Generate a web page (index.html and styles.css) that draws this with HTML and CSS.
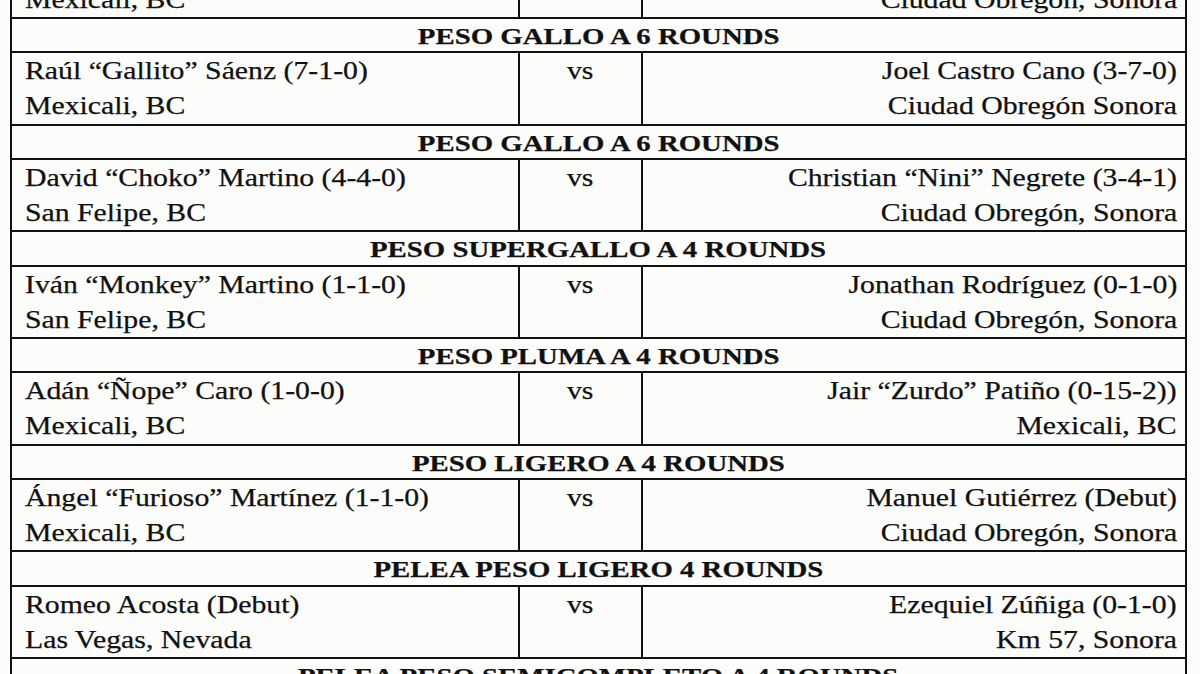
FILE: index.html
```html
<!DOCTYPE html>
<html lang="es">
<head>
<meta charset="utf-8">
<title>Cartelera</title>
<link rel="stylesheet" href="styles.css">
</head>
<body>
<div class="sheet">
  <div class="match">
    <div class="cell left"><div class="ln"><span class="t">&nbsp;</span></div><div class="ln"><span class="t">Mexicali, BC</span></div></div>
    <div class="cell mid"><div class="ln"><span class="t">vs</span></div></div>
    <div class="cell right"><div class="ln"><span class="t">&nbsp;</span></div><div class="ln"><span class="t">Ciudad Obregón, Sonora</span></div></div>
  </div>

  <div class="hdr"><span class="t">PESO GALLO A 6 ROUNDS</span></div>
  <div class="match">
    <div class="cell left"><div class="ln"><span class="t">Raúl “Gallito” Sáenz (7-1-0)</span></div><div class="ln"><span class="t">Mexicali, BC</span></div></div>
    <div class="cell mid"><div class="ln"><span class="t">vs</span></div></div>
    <div class="cell right"><div class="ln"><span class="t">Joel Castro Cano (3-7-0)</span></div><div class="ln"><span class="t">Ciudad Obregón Sonora</span></div></div>
  </div>

  <div class="hdr"><span class="t">PESO GALLO A 6 ROUNDS</span></div>
  <div class="match">
    <div class="cell left"><div class="ln"><span class="t">David “Choko” Martino (4-4-0)</span></div><div class="ln"><span class="t">San Felipe, BC</span></div></div>
    <div class="cell mid"><div class="ln"><span class="t">vs</span></div></div>
    <div class="cell right"><div class="ln"><span class="t">Christian “Nini” Negrete (3-4-1)</span></div><div class="ln"><span class="t">Ciudad Obregón, Sonora</span></div></div>
  </div>

  <div class="hdr"><span class="t">PESO SUPERGALLO A 4 ROUNDS</span></div>
  <div class="match">
    <div class="cell left"><div class="ln"><span class="t">Iván “Monkey” Martino (1-1-0)</span></div><div class="ln"><span class="t">San Felipe, BC</span></div></div>
    <div class="cell mid"><div class="ln"><span class="t">vs</span></div></div>
    <div class="cell right"><div class="ln"><span class="t">Jonathan Rodríguez (0-1-0)</span></div><div class="ln"><span class="t">Ciudad Obregón, Sonora</span></div></div>
  </div>

  <div class="hdr"><span class="t">PESO PLUMA A 4 ROUNDS</span></div>
  <div class="match">
    <div class="cell left"><div class="ln"><span class="t">Adán “Ñope” Caro (1-0-0)</span></div><div class="ln"><span class="t">Mexicali, BC</span></div></div>
    <div class="cell mid"><div class="ln"><span class="t">vs</span></div></div>
    <div class="cell right"><div class="ln"><span class="t">Jair “Zurdo” Patiño (0-15-2))</span></div><div class="ln"><span class="t">Mexicali, BC</span></div></div>
  </div>

  <div class="hdr"><span class="t">PESO LIGERO A 4 ROUNDS</span></div>
  <div class="match">
    <div class="cell left"><div class="ln"><span class="t">Ángel “Furioso” Martínez (1-1-0)</span></div><div class="ln"><span class="t">Mexicali, BC</span></div></div>
    <div class="cell mid"><div class="ln"><span class="t">vs</span></div></div>
    <div class="cell right"><div class="ln"><span class="t">Manuel Gutiérrez (Debut)</span></div><div class="ln"><span class="t">Ciudad Obregón, Sonora</span></div></div>
  </div>

  <div class="hdr"><span class="t">PELEA PESO LIGERO 4 ROUNDS</span></div>
  <div class="match">
    <div class="cell left"><div class="ln"><span class="t">Romeo Acosta (Debut)</span></div><div class="ln"><span class="t">Las Vegas, Nevada</span></div></div>
    <div class="cell mid"><div class="ln"><span class="t">vs</span></div></div>
    <div class="cell right"><div class="ln"><span class="t">Ezequiel Zúñiga (0-1-0)</span></div><div class="ln"><span class="t">Km 57, Sonora</span></div></div>
  </div>

  <div class="hdr"><span class="t">PELEA PESO SEMICOMPLETO A 4 ROUNDS</span></div>
</div>
</body>
</html>
```
FILE: styles.css
```css
html, body {
  margin: 0;
  padding: 0;
}
body {
  background: #fcfcfb;
  color: #111;
  font-family: "Liberation Serif", "Times New Roman", serif;
  overflow: hidden;
  height: 674px;
}
.sheet {
  margin: -55.5px 0 0 10px;
  width: 1177px;
  box-sizing: border-box;
  border-left: 2px solid #111;
  border-right: 2px solid #111;
}
.match {
  display: grid;
  grid-template-columns: 506px 125px 1fr;
  height: 72.5px;
  box-sizing: border-box;
  border-top: 2px solid #111;
  font-size: 25px;
  line-height: 35px;
}
.cell {
  overflow: hidden;
  white-space: nowrap;
}
.left {
  padding-left: 13px;
}
.left .t {
  transform-origin: left center;
}
.mid {
  border-left: 2px solid #111;
  border-right: 2px solid #111;
  text-align: center;
}
.right {
  text-align: right;
  padding-right: 8px;
}
.right .t {
  transform-origin: right center;
}
.t {
  display: inline-block;
  transform: scaleX(1.19);
  transform-origin: center center;
  -webkit-text-stroke: 0.25px #111;
}
.hdr {
  height: 34.2px;
  box-sizing: border-box;
  border-top: 2px solid #111;
  text-align: center;
  font-weight: bold;
  font-size: 24px;
  line-height: 32px;
  padding-top: 1px;
  white-space: nowrap;
}
.hdr .t {
  transform: scaleX(1.2);
}
```
